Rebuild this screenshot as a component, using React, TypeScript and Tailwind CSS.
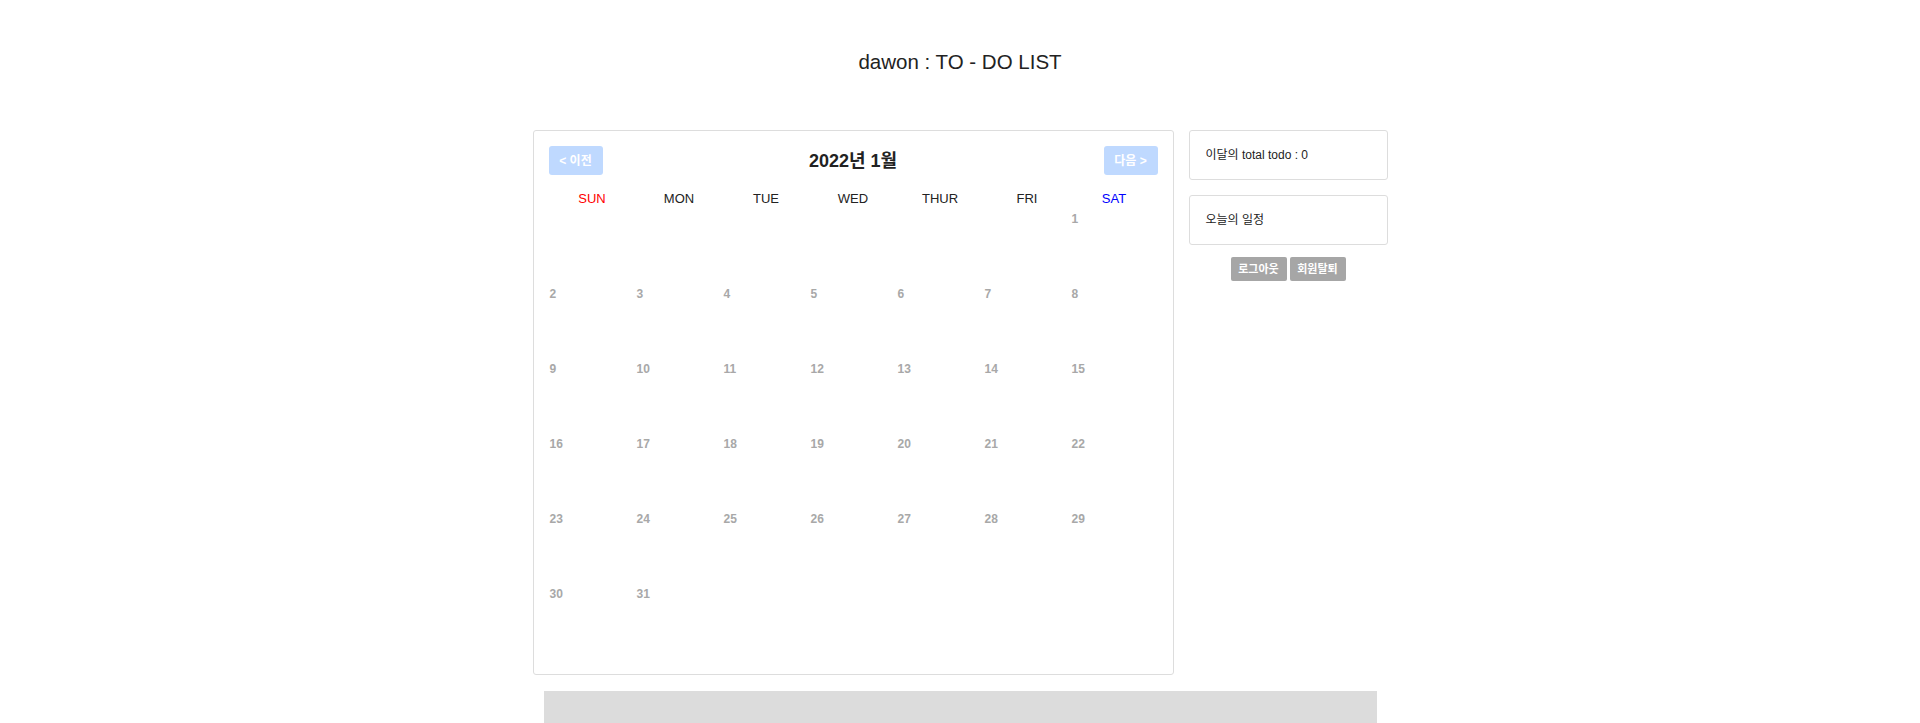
import React from "react";

const weekdays = ["SUN", "MON", "TUE", "WED", "THUR", "FRI", "SAT"];

function buildCells(): (number | null)[] {
  const cells: (number | null)[] = [];
  for (let i = 0; i < 6; i++) cells.push(null);
  for (let d = 1; d <= 31; d++) cells.push(d);
  while (cells.length < 42) cells.push(null);
  return cells;
}

export default function App() {
  const cells = buildCells();
  return (
    <div
      className="min-h-[723px] bg-white text-[#222]"
      style={{ fontFamily: '"Liberation Sans", Arial, "Noto Sans CJK KR", sans-serif' }}
    >
      <div className="mx-auto w-[855px]">
        <h1 className="pt-[50px] text-center text-[20.5px] leading-[24px] font-normal text-[#222]">
          dawon : TO - DO LIST
        </h1>
        <div className="mt-[56px] flex items-start gap-[15px]">
          {/* Calendar */}
          <div className="h-[545px] w-[641px] rounded-[3px] border border-[#dddddd] px-[15px] pt-[15px]">
            <div className="flex h-[29px] items-center justify-between">
              <button className="h-[29px] w-[54px] rounded-[3px] bg-[#bfd9ff] text-[12px] font-bold text-white">
                &lt; 이전
              </button>
              <div className="text-[18px] font-bold leading-[22px] text-[#222]">2022년 1월</div>
              <button className="h-[29px] w-[54px] rounded-[3px] bg-[#bfd9ff] text-[12px] font-bold text-white">
                다음 &gt;
              </button>
            </div>
            <div className="mt-[15px] grid h-[18px] grid-cols-7 text-[13px] leading-[18px]">
              {weekdays.map((w, i) => (
                <div
                  key={w}
                  className={
                    "text-center " +
                    (i === 0 ? "text-[#ff0000]" : i === 6 ? "text-[#0000ff]" : "text-[#222]")
                  }
                >
                  {w}
                </div>
              ))}
            </div>
            <div className="grid grid-cols-7">
              {cells.map((d, i) => (
                <div
                  key={i}
                  className="h-[75px] pl-[1px] pt-[4px] text-[12px] leading-[14px] font-bold text-[#a8a8a8]"
                >
                  {d ?? ""}
                </div>
              ))}
            </div>
          </div>
          {/* Side panel */}
          <div className="flex w-[199px] flex-col">
            <div className="flex h-[50px] items-center rounded-[3px] border border-[#dddddd] pl-[16px] text-[12px] text-[#222]">
              이달의 total todo : 0
            </div>
            <div className="mt-[15px] flex h-[50px] items-center rounded-[3px] border border-[#dddddd] pl-[16px] text-[12px] text-[#222]">
              오늘의 일정
            </div>
            <div className="mt-[12px] flex justify-center gap-[3px]">
              <button className="h-[24px] w-[56px] rounded-[2px] bg-[#a6a6a6] text-[11px] font-bold text-white">
                로그아웃
              </button>
              <button className="h-[24px] w-[56px] rounded-[2px] bg-[#a6a6a6] text-[11px] font-bold text-white">
                회원탈퇴
              </button>
            </div>
          </div>
        </div>
        <div className="mx-auto mt-[16px] h-[32px] w-[833px] bg-[#dcdcdc]" />
      </div>
    </div>
  );
}
